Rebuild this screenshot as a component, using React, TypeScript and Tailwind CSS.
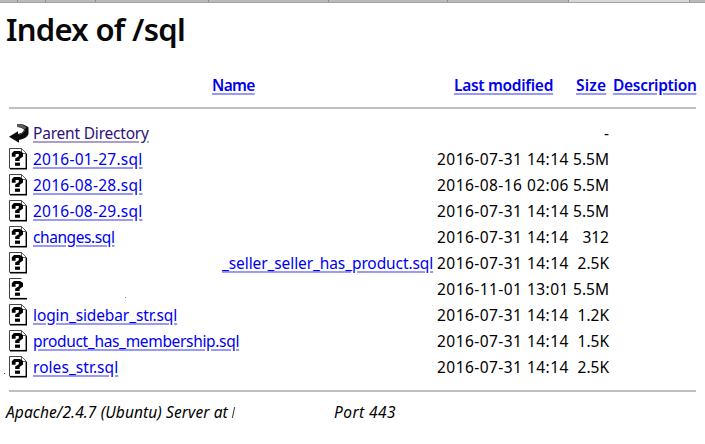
import React from 'react';

type Row = { name: string; date: string; size: string; kind?: 'parent' | 'tail' | 'blank' | 'last'; track?: string };

const rows: Row[] = [
  { name: 'Parent Directory', date: '', size: '-', kind: 'parent', track: 'tracking-[-0.2px]' },
  { name: '2016-01-27.sql', date: '2016-07-31 14:14', size: '5.5M', track: 'tracking-[0.25px]' },
  { name: '2016-08-28.sql', date: '2016-08-16 02:06', size: '5.5M', track: 'tracking-[0.25px]' },
  { name: '2016-08-29.sql', date: '2016-07-31 14:14', size: '5.5M', track: 'tracking-[0.25px]' },
  { name: 'changes.sql', date: '2016-07-31 14:14', size: '312', track: 'tracking-[-0.42px]' },
  { name: '_seller_seller_has_product.sql', date: '2016-07-31 14:14', size: '2.5K', kind: 'tail', track: 'tracking-[-0.1px]' },
  { name: '', date: '2016-11-01 13:01', size: '5.5M', kind: 'blank' },
  { name: 'login_sidebar_str.sql', date: '2016-07-31 14:14', size: '1.2K', track: 'tracking-[-0.12px]' },
  { name: 'product_has_membership.sql', date: '2016-07-31 14:14', size: '1.5K', track: 'tracking-[-0.33px]' },
  { name: 'roles_str.sql', date: '2016-07-31 14:14', size: '2.5K', kind: 'last', track: 'tracking-[0.05px]' },
];

function BackIcon() {
  return (
    <svg width="20" height="22" viewBox="0 0 20 22" className="block shrink-0">
      <path d="M8 2 Q14 1.5 17.5 4 L19.5 5.5 V12 Q18 16.5 10 18 V20.8 L0 14.8 L9 9.3 V12 Q14.5 11 15 7.5 Q13 5.5 8 4.5Z" fill="#0c0c0c" />
      <path d="M8 2 Q15 2 17.5 5.5 L15.5 7.5 Q13 5.3 8 5Z" fill="#5a5a5a" />
      <path d="M16 8 Q14.5 11.5 10 12.5" fill="none" stroke="#666" strokeWidth="0.8" />
    </svg>
  );
}

function UnknownIcon({ open }: { open?: boolean }) {
  return (
    <svg width="20" height="22" viewBox="0 0 20 22" className="block shrink-0">
      <path d="M0.5 20.5 V0.5 H12.5 L17.5 5.5 V20.5Z" fill="#fff" />
      <path d="M0.5 20.5 V0.5 H12.5" fill="none" stroke="#444" />
      {!open && <path d="M12.5 0.5 V5.5 H17.5 L12.5 0.5" fill="#fff" stroke="#333" strokeWidth="0.8" />}
      {!open && <path d="M17.3 6 V20.5" stroke="#000" strokeWidth="1.4" />}
      <path d="M1 20.7 H18" stroke="#000" strokeWidth="1.6" />
      <path d="M2.8 5.2 L5 3 H11 L14 5 V8.6 L10.6 11 V13 H6.2 V10.4 L9.8 8.2 V6 H6.6 V8.8 H2.8Z" fill="#000" />
      <rect x="6" y="14.6" width="5" height="3.2" fill="#000" />
    </svg>
  );
}

const underline = 'underline decoration-current/40 decoration-[1.5px] underline-offset-2 whitespace-nowrap';
const blue = `text-[#0000ee] ${underline}`;
const purple = `text-[#2e0f7a] ${underline}`;

export default function App() {
  return (
    <div className="h-[444px] w-[705px] overflow-hidden bg-white font-['Noto_Sans',sans-serif] text-[15.5px] leading-[26px] text-black">
      <div className="flex h-[3px] border-b border-[#a3a3a3] bg-[#bababa]">
        <i className="w-[18px] border-r border-[#909090]" />
        <i className="w-7 border-r border-[#909090]" />
        <i className="w-[50px] border-r border-[#909090]" />
        <i className="w-[113px] border-r border-[#909090]" />
        <i className="w-[120px] border-r border-[#909090]" />
        <i className="w-[119px] border-r border-[#909090]" />
        <i className="w-[121px] border-r border-[#909090]" />
        <i className="w-[121px] border-r border-[#909090] bg-[#d8d8d8]" />
      </div>
      <h1 className="h-[69px] pl-[6px] pt-[6px] text-[31px] font-semibold leading-[40px] tracking-[-0.7px] text-[#080808]">Index of /sql</h1>
      <div className="flex h-[35px] font-semibold tracking-[-0.3px]">
        <span className="w-[454px] pl-[212px]"><a className={`${blue} tracking-[-0.65px]`}>Name</a></span>
        <span className="w-[122px]"><a className={blue}>Last modified</a></span>
        <span className="w-[37px]"><a className={`${blue} tracking-[0.2px]`}>Size</a></span>
        <a className={blue}>Description</a>
      </div>
      <hr className="ml-[9px] w-[687px] border-0 border-t-2 border-[#c0c0c0]" />
      <main className="pt-[11px]">
        {rows.map((row, index) => (
          <div key={index} className="flex h-[26px] items-center">
            <span className="flex w-[9px] justify-center pt-3">{row.kind === 'last' && <i className="size-px bg-[#555]" />}</span>
            {row.kind === 'parent' ? <BackIcon /> : <UnknownIcon open={row.kind === 'blank'} />}
            <div className={row.kind === 'tail' ? 'ml-[4px] w-[404px] pl-[189px]' : 'ml-[4px] w-[404px]'}>
              {row.name && <a className={`${row.kind === 'parent' ? purple : blue} ${row.track}`}>{row.name}</a>}
              {row.kind === 'blank' && <span className="ml-[92px] mt-4 block size-px bg-[#7777ee]" />}
            </div>
            <span className="w-[134px] whitespace-nowrap tracking-[0.45px]">{row.date}</span>
            <span className="w-[38px] whitespace-nowrap text-right">{row.size}</span>
          </div>
        ))}
      </main>
      <hr className="ml-[9px] mt-[10px] w-[687px] border-0 border-t-2 border-[#c0c0c0]" />
      <footer className="flex pl-[6px] pt-[7px] italic">
        <span className="flex w-[328px] whitespace-nowrap tracking-[0.1px]">Apache/2.4.7 (Ubuntu) Server at<i className="ml-[5px] mt-[8px] h-[11px] w-px -skew-x-12 bg-[#333]" /></span>
        <span className="tracking-[0.45px]">Port 443</span>
      </footer>
    </div>
  );
}
